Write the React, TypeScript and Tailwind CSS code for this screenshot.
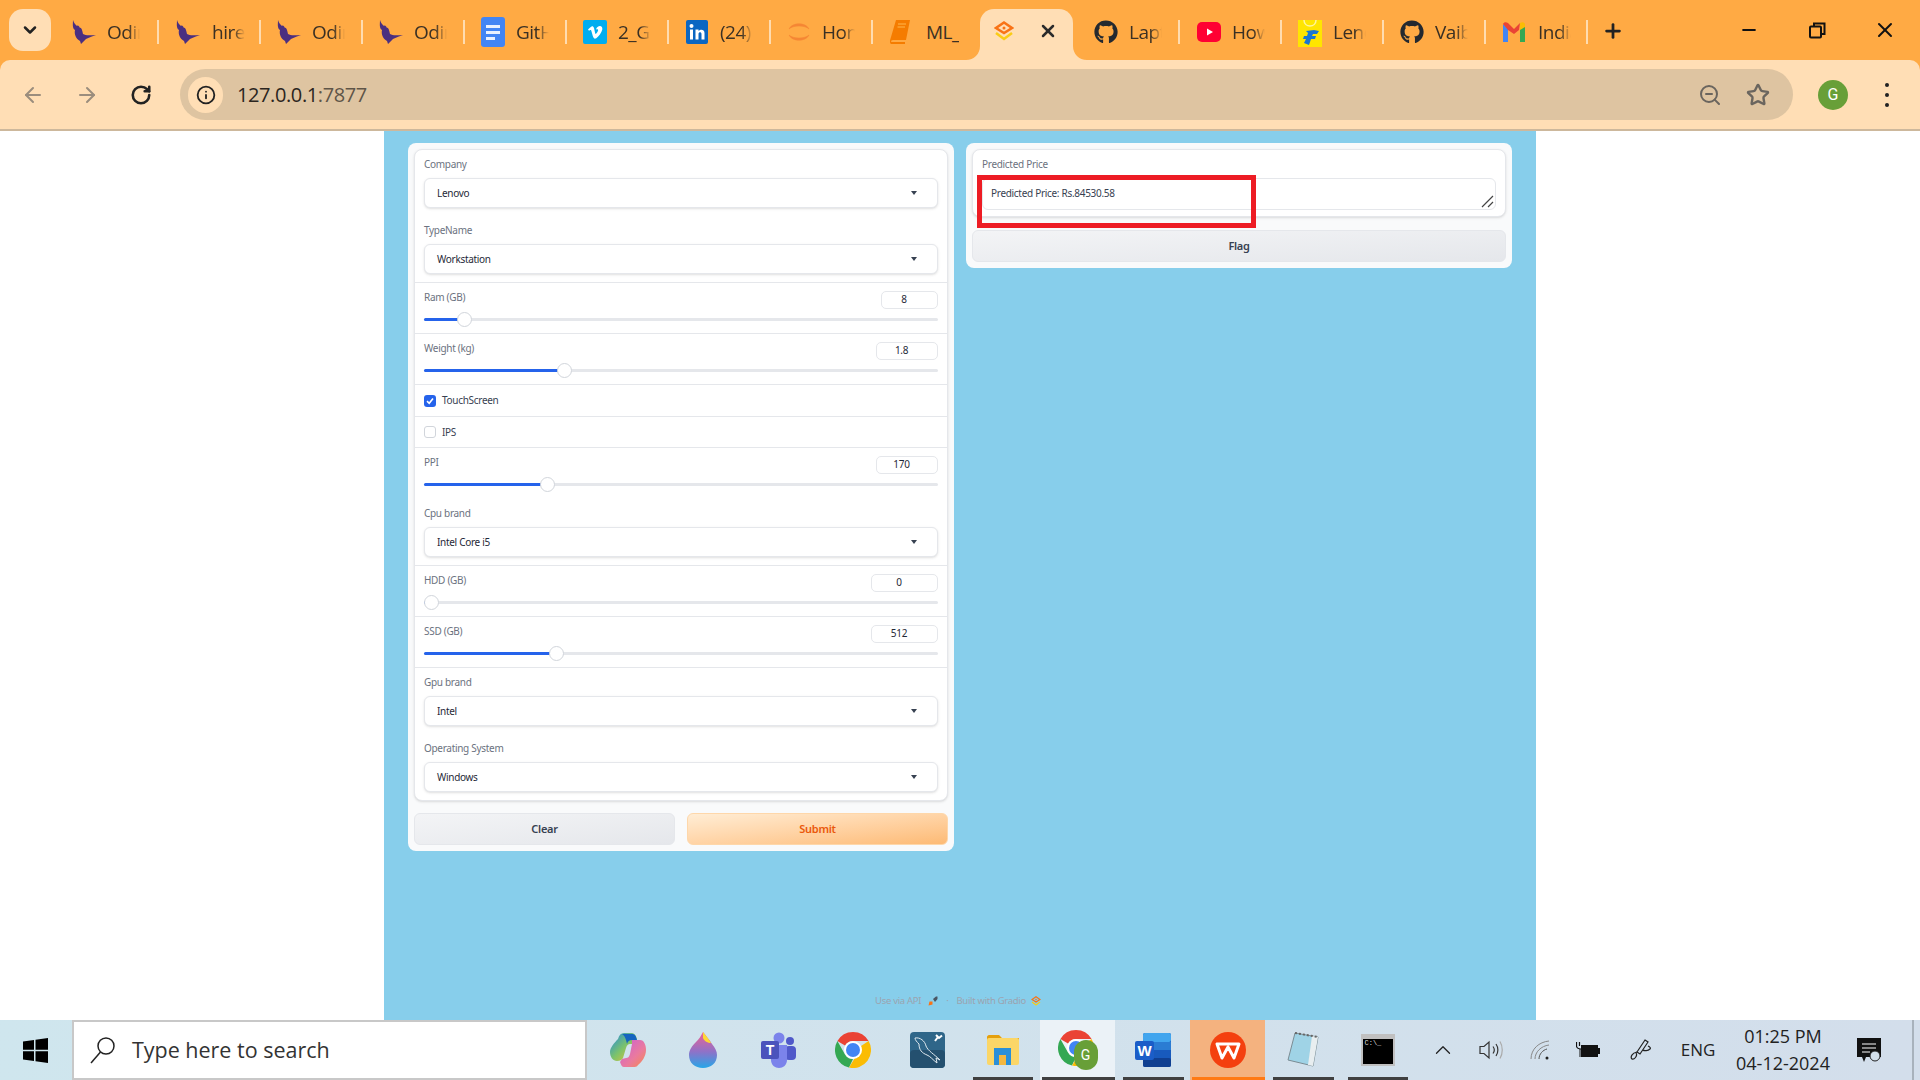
import type { ReactNode } from "react";
import { ArrowLeft, ArrowRight, ChevronDown, ChevronUp, Info, Minus, Plus, RotateCw, Star, X, ZoomOut } from "lucide-react";
import { FaGithub } from "react-icons/fa";

function Bird() {
  return (
    <svg width="24" height="24" viewBox="0 0 24 24">
      <path d="M1 0C2 3 3 4 5 6C6 5 7 6 8 8C9 7 10 9 11 14C14 16 19 15 24 15C20 16 17 18 14 19L9 24L8 21C4 19 2 14 3 10C0 8 1 4 1 0Z" fill="#4b2f80" />
    </svg>
  );
}

function Docs() {
  return (
    <svg width="24" height="30" viewBox="0 0 24 30">
      <rect width="24" height="30" rx="3" fill="#4285f4" />
      <rect x="5" y="8" width="14" height="3" fill="#e8f0fe" />
      <rect x="5" y="14" width="14" height="3" fill="#e8f0fe" />
      <rect x="5" y="20" width="9" height="3" fill="#e8f0fe" />
    </svg>
  );
}

function Vimeo() {
  return (
    <svg width="24" height="24" viewBox="0 0 24 24">
      <rect width="24" height="24" rx="2" fill="#00adef" />
      <path d="M5 9.500L6 10.800C7 10 7.800 9.800 8.200 10.600C9 12.800 9.500 15.500 10.300 17.300C11 18.800 12 19 13.300 18.200C15.800 16.400 18.500 13 19.300 9.500C19.800 6.500 17.200 5 14.500 7C13.800 7.600 13.300 8.500 13 9.500C14.500 8.800 15.500 9.300 15 10.800C14.600 12 13.200 14.200 12.600 14C12 13.500 11.700 10.500 11 8C10.300 6 9 6 7.800 6.900C6.800 7.600 5.800 8.600 5 9.500Z" fill="#fff" />
    </svg>
  );
}

function LinkedIn() {
  return (
    <svg width="22" height="24" viewBox="0 0 22 24">
      <rect width="22" height="24" rx="2" fill="#0a66c2" />
      <circle cx="5.500" cy="6" r="2" fill="#fff" />
      <rect x="4" y="9.500" width="3" height="10" fill="#fff" />
      <path d="M9.500 9.500H12.500V11C13.500 9.300 18.500 8.500 18.500 13V19.500H15.500V14C15.500 11.500 12.500 11.500 12.500 14V19.500H9.500Z" fill="#fff" />
    </svg>
  );
}

function Spinner() {
  return (
    <svg width="24" height="24" viewBox="0 0 24 24" fill="none" stroke="#f58634">
      <path d="M2 9C5 2 19 2 22 9C18 5 6 5 2 9Z" fill="#f58634" strokeWidth="0.500" />
      <path d="M2 15C5 22 19 22 22 15C18 19 6 19 2 15Z" fill="#f58634" strokeWidth="0.500" />
    </svg>
  );
}

function Book() {
  return (
    <svg width="20" height="24" viewBox="0 0 20 24">
      <path d="M6 0H20L16 20H3C1 20 0 22 2 22H15L15 24H2C-1 24 0 20 1 17Z" fill="#f57c00" />
      <path d="M8 4H16M7.500 7H15" stroke="#ffb74d" strokeWidth="1" />
    </svg>
  );
}

function GradioMark({ size = 20 }: { size?: number }) {
  return (
    <svg width={size} height={size} viewBox="0 0 20 20" fill="none" strokeWidth="2.500">
      <path d="M10 1.500L18 7L10 12L2 7Z" stroke="#f97316" />
      <path d="M2 12L10 18L18 12" stroke="#facc15" />
      <circle cx="10" cy="7" r="1.500" fill="#f97316" stroke="none" />
    </svg>
  );
}

function Youtube() {
  return (
    <svg width="24" height="20" viewBox="0 0 24 20">
      <rect width="24" height="20" rx="5" fill="#ff0033" />
      <path d="M10 6.500L16 10L10 13.500Z" fill="#fff" />
    </svg>
  );
}

function Flipkart() {
  return (
    <svg width="24" height="30" viewBox="0 0 24 30">
      <rect y="3" width="24" height="27" fill="#ffe500" />
      <path d="M6 3C6 11 18 11 18 3" fill="none" stroke="#fff59d" strokeWidth="1.500" />
      <path d="M8 14L16 13L21 14L19 17H15L14 19H18L17 22H13L11 28L6 26L8 22H5L6 19H9L10 16Z" fill="#1976d2" />
    </svg>
  );
}

function Gmail() {
  return (
    <svg width="22" height="20" viewBox="0 0 22 20">
      <path d="M0 2V20H5V7Z" fill="#4285f4" />
      <path d="M22 2V20H17V7Z" fill="#34a853" />
      <path d="M0 2C1 0 3 0 5 1L11 7L17 1L16 8L11 12L5 8Z" fill="#ea4335" />
      <path d="M17 1C19 0 21 0 22 2V5L17 8Z" fill="#fbbc04" />
    </svg>
  );
}

function Tab({ icon, title, left = 15, textLeft = 11 }: { icon: ReactNode; title: string; left?: number; textLeft?: number }) {
  return (
    <div className="w-[102px] h-[24px] shrink-0 flex items-center border-r-2 border-[#ffdcb0]" style={{ paddingLeft: left }}>
      <div className="w-[24px] h-[24px] shrink-0 flex items-center justify-center">{icon}</div>
      <span
        className="w-[33px] overflow-hidden whitespace-nowrap text-[19px] tracking-[-0.5px] leading-[24px] text-[#3a3024] [mask-image:linear-gradient(to_right,black_65%,transparent)]"
        style={{ marginLeft: textLeft }}
      >
        {title}
      </span>
    </div>
  );
}

function ActiveTab() {
  return (
    <div className="relative ml-[5px] mr-[5px] w-[93px] h-[51px] self-end shrink-0 bg-[#ffdeb5] rounded-t-[14px] flex items-start pt-[12px] pl-[14px]">
      <svg className="absolute -left-[14px] bottom-0" width="14" height="14" viewBox="0 0 14 14">
        <path d="M14 0V14H0C8 14 14 8 14 0Z" fill="#ffdeb5" />
      </svg>
      <GradioMark size={20} />
      <X className="ml-[24px] mt-[0px] text-[#2b2b2b]" size={20} strokeWidth={3} />
      <svg className="absolute -right-[14px] bottom-0" width="14" height="14" viewBox="0 0 14 14">
        <path d="M0 0V14H14C6 14 0 8 0 0Z" fill="#ffdeb5" />
      </svg>
    </div>
  );
}

function TabStrip() {
  return (
    <div className="h-[60px] shrink-0 bg-[#ffaa44] flex items-center font-['Open_Sans',sans-serif]">
      <div className="ml-[9px] w-[42px] h-[42px] mr-[6px] bg-[#ffdeb5] rounded-[14px] flex items-center justify-center">
        <ChevronDown size={20} strokeWidth={3} className="text-[#222]" />
      </div>
      <div className="flex items-center h-[60px] pt-[4px]">
        <Tab icon={<Bird />} title="Odin" />
        <Tab icon={<Bird />} title="hire" left={17} textLeft={12} />
        <Tab icon={<Bird />} title="Odin" left={16} />
        <Tab icon={<Bird />} title="Odin" left={16} />
        <Tab icon={<Docs />} title="GitH" left={16} />
        <Tab icon={<Vimeo />} title="2_GitH" left={16} />
        <Tab icon={<LinkedIn />} title="(24)" left={16} />
        <Tab icon={<Spinner />} title="Hon" left={16} />
        <div className="w-[102px] h-[24px] shrink-0 flex items-center pl-[17px]">
          <Book />
          <span className="ml-[16px] w-[33px] overflow-hidden whitespace-nowrap text-[19px] tracking-[-0.5px] text-[#3a3024]">ML_</span>
        </div>
      </div>
      <div className="flex h-full items-center">
        <ActiveTab />
        <div className="flex items-center h-[60px] pt-[4px]">
          <Tab icon={<FaGithub size={24} color="#24292f" />} title="Lapt" left={16} />
          <Tab icon={<Youtube />} title="How" left={17} />
          <Tab icon={<Flipkart />} title="Lenovo" left={16} />
          <Tab icon={<FaGithub size={24} color="#24292f" />} title="Vaib" left={16} />
          <Tab icon={<Gmail />} title="India" left={16} textLeft={12} />
        </div>
      </div>
      <Plus className="ml-[14px] mt-[2px] text-[#222]" size={22} strokeWidth={3} />
      <div className="ml-auto flex items-center h-full text-[#111]">
        <Minus size={20} strokeWidth={2.500} className="mr-[50px]" />
        <svg width="17" height="17" viewBox="0 0 17 17" fill="none" stroke="#111" strokeWidth="2" className="mr-[47px]">
          <rect x="1" y="4.500" width="11" height="11" rx="1" />
          <path d="M5 4V1.500H15.500V12H12.500" />
        </svg>
        <X size={24} strokeWidth={2} className="mr-[23px]" />
      </div>
    </div>
  );
}

function Toolbar() {
  return (
    <div className="bg-[#ffaa44] shrink-0">
      <div className="h-[69px] bg-[#ffdeb5] rounded-t-[10px] flex items-center font-['Open_Sans',sans-serif]">
        <ArrowLeft size={24} className="ml-[21px] text-[#9b8d7d]" />
        <ArrowRight size={24} className="ml-[30px] text-[#9b8d7d]" />
        <RotateCw size={22} strokeWidth={2.800} className="ml-[31px] text-[#222]" />
        <div className="ml-[28px] w-[1613px] h-[51px] bg-[#dec4a1] rounded-full flex items-center pl-[8px]">
          <div className="w-[35px] h-[36px] bg-[#ffdeb5] rounded-full flex items-center justify-center">
            <Info size={20} strokeWidth={2.200} className="text-[#222]" />
          </div>
          <span className="ml-[14px] text-[20px] tracking-[-0.4px] text-[#2b2520]">
            127.0.0.1<span className="text-[#5f5548]">:7877</span>
          </span>
          <ZoomOut size={24} strokeWidth={2} className="ml-auto mr-[24px] text-[#6a655e]" />
          <Star size={24} strokeWidth={2.400} className="mr-[23px] text-[#6a655e]" />
        </div>
        <div className="ml-[25px] w-[30px] h-[30px] rounded-full bg-[#689f38] flex items-center justify-center text-white text-[16px] font-['Roboto',sans-serif]">
          G
        </div>
        <div className="ml-[37px] flex flex-col gap-[6px]">
          <span className="w-[4px] h-[4px] rounded-full bg-[#222]" />
          <span className="w-[4px] h-[4px] rounded-full bg-[#222]" />
          <span className="w-[4px] h-[4px] rounded-full bg-[#222]" />
        </div>
      </div>
      <div className="h-[2px] bg-[#cdb89c]" />
    </div>
  );
}

function Caret() {
  return <span className="w-0 h-0 border-x-[3.500px] border-x-transparent border-t-[4px] border-t-[#374151]" />;
}

function Dropdown({ label, value, divider }: { label: string; value: string; divider?: boolean }) {
  return (
    <div className={divider ? "px-[9px] pt-[7px] pb-[8px] border-b border-[#e5e7eb]" : "px-[9px] pt-[7px] pb-[8px]"}>
      <div className="h-[14px] leading-[14px] text-[10px] text-[#6b7280]">{label}</div>
      <div className="mt-[7px] h-[30px] bg-white border border-[#e5e7eb] rounded-[6px] shadow-sm flex items-center justify-between pl-[12px] pr-[20px]">
        <span className="text-[10px] text-[#1f2937]">{value}</span>
        <Caret />
      </div>
    </div>
  );
}

function Slider({ label, value, pos, box, divider }: { label: string; value: string; pos: number; box: number; divider?: boolean }) {
  return (
    <div className={divider ? "h-[51px] px-[9px] pt-[7.500px] border-b border-[#e5e7eb]" : "h-[51px] px-[9px] pt-[7.500px]"}>
      <div className="h-[18px] flex items-center justify-between">
        <span className="self-start leading-[13px] text-[10px] text-[#6b7280]">{label}</span>
        <div
          className="h-[18px] bg-white border border-[#e5e7eb] rounded-[5px] flex items-center justify-center pr-[11px] text-[10px] text-[#1f2937]"
          style={{ width: box }}
        >
          {value}
        </div>
      </div>
      <div className="mt-[3px] h-[15px] flex items-center">
        <div className="relative w-full h-[3px] rounded-full bg-[#e5e7eb]">
          <div className="h-[3px] rounded-full bg-[#2563eb]" style={{ width: pos }} />
          <div
            className="absolute -top-[6px] -ml-[7px] w-[15px] h-[15px] rounded-full bg-white border border-[#d1d5db]"
            style={{ left: pos }}
          />
        </div>
      </div>
    </div>
  );
}

function Checkbox({ label, checked, height }: { label: string; checked?: boolean; height: number }) {
  return (
    <div className="px-[9px] flex items-center border-b border-[#e5e7eb]" style={{ height }}>
      {checked ? (
        <div className="w-[12px] h-[12px] rounded-[3px] bg-[#2563eb] flex items-center justify-center">
          <svg width="8" height="8" viewBox="0 0 8 8" fill="none" stroke="#fff" strokeWidth="1.600">
            <path d="M1 4.200L3.200 6.300L7 1.500" />
          </svg>
        </div>
      ) : (
        <div className="w-[12px] h-[12px] rounded-[3px] bg-white border border-[#d1d5db]" />
      )}
      <span className="ml-[6px] text-[10px] text-[#374151]">{label}</span>
    </div>
  );
}

function InputPanel() {
  return (
    <div className="w-[546px] shrink-0 bg-[#f9fafb] rounded-[8px] p-[6px]">
      <div className="bg-white border border-[#e5e7eb] rounded-[8px] shadow-sm">
        <Dropdown label="Company" value="Lenovo" />
        <Dropdown label="TypeName" value="Workstation" divider />
        <Slider label="Ram (GB)" value="8" pos={40} box={57} divider />
        <Slider label="Weight (kg)" value="1.8" pos={140} box={62} divider />
        <Checkbox label="TouchScreen" checked height={32} />
        <Checkbox label="IPS" height={31} />
        <Slider label="PPI" value="170" pos={123} box={62} />
        <Dropdown label="Cpu brand" value="Intel Core i5" divider />
        <Slider label="HDD (GB)" value="0" pos={7} box={67} divider />
        <Slider label="SSD (GB)" value="512" pos={132} box={67} divider />
        <Dropdown label="Gpu brand" value="Intel" />
        <Dropdown label="Operating System" value="Windows" />
      </div>
      <div className="mt-[12px] flex gap-[12px]">
        <button className="flex-1 h-[32px] rounded-[6px] bg-linear-to-br from-[#f3f4f6] to-[#e5e7eb] border border-[#e5e7eb] text-[11px] font-semibold text-[#374151]">
          Clear
        </button>
        <button className="flex-1 h-[32px] rounded-[6px] bg-linear-to-br from-[#ffedd5] to-[#fdba74] border border-[#fed7aa] text-[11px] font-semibold text-[#ea580c]">
          Submit
        </button>
      </div>
    </div>
  );
}

function OutputPanel() {
  return (
    <div className="relative w-[546px] shrink-0 bg-[#f9fafb] rounded-[8px] p-[6px]">
      <div className="bg-white border border-[#e5e7eb] rounded-[8px] shadow-sm px-[9px] pt-[7px] pb-[6px]">
        <div className="h-[14px] leading-[14px] text-[10px] text-[#6b7280]">Predicted Price</div>
        <div className="relative mt-[7px] h-[32px] bg-white border border-[#e5e7eb] rounded-[6px] pl-[8px] pt-[7px] text-[10px] leading-[14px] text-[#374151]">
          Predicted Price: Rs.84530.58
          <svg className="absolute right-[1px] bottom-[1px]" width="13" height="13" viewBox="0 0 13 13" fill="none" stroke="#444" strokeWidth="1.200">
            <path d="M1 12L12 1M7 12L12 7" />
          </svg>
        </div>
      </div>
      <button className="mt-[13px] w-full h-[32px] rounded-[6px] bg-linear-to-br from-[#f3f4f6] to-[#e5e7eb] border border-[#e5e7eb] text-[11px] font-semibold text-[#374151]">
        Flag
      </button>
      <div className="absolute left-[11px] top-[32px] w-[279px] h-[53px] border-[5px] border-[#ed1c24]" />
    </div>
  );
}

function Footer() {
  return (
    <div className="mt-auto mb-[12px] h-[14px] flex items-center justify-center pr-[4px] text-[9.500px] text-[#9ca3af]">
      <span>Use via API</span>
      <svg className="ml-[7px]" width="10" height="10" viewBox="0 0 10 10">
        <path d="M5 3L8 0.500H9.500V3L7 6Z" fill="#4b5563" />
        <path d="M0.500 9.500L1.500 5.500L4.500 5.500V8.500Z" fill="#f97316" />
      </svg>
      <span className="mx-[8px]">·</span>
      <span>Built with Gradio</span>
      <span className="ml-[5px]">
        <GradioMark size={10} />
      </span>
    </div>
  );
}

function Copilot() {
  return (
    <svg width="36" height="36" viewBox="0 0 36 36">
      <defs>
        <linearGradient id="cp1" x1="0" y1="0" x2="1" y2="1">
          <stop offset="0" stopColor="#1e88e5" />
          <stop offset="0.500" stopColor="#7cc36b" />
          <stop offset="1" stopColor="#f6c12c" />
        </linearGradient>
        <linearGradient id="cp2" x1="0" y1="0" x2="1" y2="1">
          <stop offset="0" stopColor="#c85fd6" />
          <stop offset="0.600" stopColor="#ea7a9e" />
          <stop offset="1" stopColor="#f58b4c" />
        </linearGradient>
      </defs>
      <path d="M8 7C9 3 11 1 14 1H22C24 1 26 3 27 7L24 12H20C18 12 17 13 16 16L13 26C12 28 10 29 7 29C3 29 0 25 0 20C0 16 4 11 8 7Z" fill="url(#cp1)" />
      <path d="M22 8H30C34 8 36 13 36 18C36 24 32 30 28 33C27 35 25 35 23 35H14C12 35 11 33 10 30L12 27L16 26C18 26 19 25 20 22L22 12Z" fill="url(#cp2)" />
      <path d="M12 2H22C25 2 26 4 27 8H22C19 8 18 9 17 12L16 8C15 5 14 3 12 2Z" fill="#1565c0" />
    </svg>
  );
}

function PaintDrop() {
  return (
    <svg width="28" height="36" viewBox="0 0 28 36">
      <defs>
        <linearGradient id="pd" x1="0" y1="0" x2="0" y2="1">
          <stop offset="0" stopColor="#f06292" />
          <stop offset="0.550" stopColor="#8e72c8" />
          <stop offset="1" stopColor="#26a6e8" />
        </linearGradient>
      </defs>
      <path d="M14 0C17 4 20 7 23 12C26 16 28 19 28 23C28 31 22 36 14 36C6 36 0 31 0 23C0 18 3 14 7 10C10 7 12 4 14 0Z" fill="url(#pd)" />
      <path d="M14 0C17 4 20 7 22 11C19 11 15 9 14 6Z" fill="#fdd835" />
    </svg>
  );
}

function Teams() {
  return (
    <svg width="36" height="36" viewBox="0 0 36 36">
      <circle cx="19" cy="6" r="5.500" fill="#7b83eb" />
      <circle cx="30" cy="9" r="4" fill="#5059c9" />
      <rect x="25" y="14" width="11" height="14" rx="4" fill="#5059c9" />
      <path d="M11 13H27V28C27 33 23 36 19 36C15 36 11 33 11 28Z" fill="#7b83eb" />
      <rect x="1" y="9" width="18" height="18" rx="2" fill="#4b53bc" />
      <text x="10" y="23" textAnchor="middle" fontSize="14" fontWeight="700" fill="#fff" fontFamily="Liberation Sans">T</text>
    </svg>
  );
}

function Chrome({ size = 36 }: { size?: number }) {
  return (
    <svg width={size} height={size} viewBox="0 0 36 36">
      <path d="M18 0A18 18 0 0 1 33.600 9H18A9 9 0 0 0 10 13.500L2.400 9A18 18 0 0 1 18 0Z" fill="#ea4335" />
      <path d="M2.400 9L10 22.500A9 9 0 0 0 18 27L14 35.600A18 18 0 0 1 2.400 9Z" fill="#34a853" />
      <path d="M33.600 9A18 18 0 0 1 14 35.600L22 22.500A9 9 0 0 0 26 14Z" fill="#fbbc04" />
      <circle cx="18" cy="18" r="9" fill="#fff" />
      <circle cx="18" cy="18" r="7" fill="#4285f4" />
    </svg>
  );
}

function Mysql() {
  return (
    <svg width="35" height="36" viewBox="0 0 35 36">
      <rect width="35" height="36" rx="4" fill="#2f6689" />
      <rect y="18" width="35" height="18" rx="4" fill="#24506f" />
      <path d="M5 6C10 5 15 9 16 14C18 19 24 22 30 28L26 26L27 31C23 28 20 24 17 23C12 21 9 18 9 12C7 10 5 8 5 6Z" fill="none" stroke="#dfe9ef" strokeWidth="1" />
      <path d="M26 3L29 6L32 3.500M28 5L25 9" fill="none" stroke="#fff" strokeWidth="2" />
    </svg>
  );
}

function Explorer() {
  return (
    <svg width="32" height="30" viewBox="0 0 32 30">
      <path d="M0 2C0 1 1 0 2 0H12L15 3H32V10H0Z" fill="#e5a00d" />
      <rect y="3" width="32" height="27" rx="2" fill="#fbd667" />
      <path d="M7 13H24V30H19V20H12V30H7Z" fill="#2a8fd8" />
      <rect x="12" y="20" width="7" height="10" fill="#f4b73e" />
    </svg>
  );
}

function Word() {
  return (
    <svg width="36" height="34" viewBox="0 0 36 34">
      <rect x="8" width="28" height="34" rx="2" fill="#185abd" />
      <rect x="8" width="28" height="9" rx="2" fill="#41a5ee" />
      <rect x="8" y="9" width="28" height="8" fill="#2b7cd3" />
      <rect x="8" y="25" width="28" height="9" rx="2" fill="#103f91" />
      <rect y="8" width="19" height="19" rx="2" fill="#1a5dc8" />
      <text x="9.500" y="23" textAnchor="middle" fontSize="15" fontWeight="700" fill="#fff" fontFamily="Liberation Sans">W</text>
    </svg>
  );
}

function Wps() {
  return (
    <svg width="36" height="36" viewBox="0 0 36 36">
      <circle cx="18" cy="18" r="18" fill="#f4400f" />
      <path d="M7 12H29L24 26L18 15L12 26Z" fill="none" stroke="#fff" strokeWidth="3" strokeLinejoin="round" />
    </svg>
  );
}

function Notepad() {
  return (
    <svg width="34" height="36" viewBox="0 0 34 36">
      <path d="M9 1L32 5L27 34L2 28Z" fill="#9fd3e6" stroke="#7a8c94" />
      <path d="M26 4L32 5L27 34L22 33Z" fill="#e8eef0" />
      <path d="M9 1L32 5" stroke="#666" strokeWidth="2" strokeDasharray="2 2" />
    </svg>
  );
}

function Terminal() {
  return (
    <div className="w-[34px] h-[32px] bg-black border-2 border-[#c0c0c0] border-t-[5px] pl-[2px] text-[7px] leading-[9px] text-[#ddd] font-['Liberation_Mono',monospace]">
      C:\_
    </div>
  );
}

function Slot({ children, bar, bg }: { children: ReactNode; bar?: string; bg?: string }) {
  return (
    <div className={`relative w-[75px] h-[60px] flex items-center justify-center ${bg ?? ""}`}>
      {children}
      {bar && <div className={`absolute bottom-0 h-[3px] ${bar}`} />}
    </div>
  );
}

function Tray() {
  return (
    <div className="flex items-center h-full text-[#222]">
      <div className="w-[48px] ml-[4px] flex justify-center"><ChevronUp size={26} strokeWidth={1.200} /></div>
      <div className="w-[48px] flex justify-center">
        <svg width="24" height="24" viewBox="0 0 24 24" fill="none" stroke="#333" strokeWidth="1.200">
          <path d="M1 8.500V15.500H5L10 20V4L5 8.500Z" />
          <path d="M14 8.500C15.500 10.500 15.500 13.500 14 15.500M17 6C19.500 9.500 19.500 14.500 17 18" />
          <path d="M21 3.500C24 8.500 24 15.500 21 20.500" stroke="#aaa" />
        </svg>
      </div>
      <div className="w-[49px] flex justify-center">
        <svg width="20" height="20" viewBox="0 0 20 20" fill="none" stroke="#888" strokeWidth="1">
          <path d="M1 19C1 9 9 2 19 1M5 19C5 12 11 6 19 5" />
          <path d="M9 19C9 14 13 10 17 9" stroke="#555" />
          <circle cx="17" cy="18" r="1.500" fill="#222" stroke="none" />
        </svg>
      </div>
      <div className="w-[47px] flex justify-center">
        <svg width="24" height="18" viewBox="0 0 24 18">
          <rect x="5" y="4" width="17" height="12" fill="#111" />
          <rect x="22" y="7" width="2" height="6" fill="#111" />
          <path d="M0.500 1V5C0.500 7 3 8 5 8M3.500 1V5" fill="none" stroke="#111" strokeWidth="1.200" />
          <path d="M4 8V16" stroke="#111" strokeWidth="1" />
        </svg>
      </div>
      <div className="w-[48px] ml-[6px] flex justify-center">
        <svg width="22" height="22" viewBox="0 0 22 22" fill="none" stroke="#222" strokeWidth="1.200">
          <path d="M15 1L18 3L10 15L7 13Z" />
          <path d="M7 13C2 14 0 18 2 20C4 21 8 17 6 14M18 7C20 8 21 9 20 10C18 12 14 12 13 11" />
        </svg>
      </div>
      <div className="w-[58px] ml-[4px] text-center text-[17px]">ENG</div>
      <div className="w-[108px] ml-[2px] flex flex-col items-center text-[18px] leading-[27px]">
        <span>01:25 PM</span>
        <span>04-12-2024</span>
      </div>
      <div className="w-[48px] ml-[8px] flex justify-center">
        <svg width="24" height="24" viewBox="0 0 24 24">
          <path d="M0 0H24V19H9L7 24L5 19H0Z" fill="#111" />
          <path d="M5 6H19M5 10H19M5 14H13" stroke="#fff" strokeWidth="1" />
          <circle cx="18" cy="18" r="5" fill="#d3dfea" stroke="#222" />
        </svg>
      </div>
      <div className="ml-[19px] w-[2px] h-full bg-[#a8b2bc]" />
      <div className="w-[6px]" />
    </div>
  );
}

function Taskbar() {
  return (
    <div className="h-[60px] shrink-0 bg-linear-to-r from-[#cfe6ee] to-[#d3deeb] flex font-['Open_Sans',sans-serif]">
      <div className="w-[72px] flex items-center justify-center">
        <svg width="25" height="25" viewBox="0 0 25 25" fill="#000">
          <path d="M0 3.500L11 2V11.800H0ZM12.500 1.800L25 0V11.800H12.500ZM0 13.300H11V23L0 21.500ZM12.500 13.300H25V25L12.500 23.200Z" />
        </svg>
      </div>
      <div className="w-[516px] h-full bg-white border-2 border-[#c8c8c8] flex items-center pl-[16px]">
        <svg width="26" height="28" viewBox="0 0 26 28" fill="none" stroke="#222" strokeWidth="1.500">
          <circle cx="16" cy="10" r="8" />
          <path d="M10.500 16L1 27" />
        </svg>
        <span className="ml-[16px] text-[21.500px] text-[#333]">Type here to search</span>
      </div>
      <div className="ml-[3px] flex">
        <Slot><Copilot /></Slot>
        <Slot><PaintDrop /></Slot>
        <Slot><Teams /></Slot>
        <Slot><Chrome /></Slot>
        <Slot><Mysql /></Slot>
        <Slot bar="left-[8px] right-[7px] bg-[#404040]"><Explorer /></Slot>
        <Slot bg="bg-[#ebf2f7]" bar="left-[2px] right-0 bg-[#404040]">
          <div className="relative w-[40px] h-[40px]">
            <Chrome />
            <div className="absolute right-0 bottom-0 w-[24px] h-[30px] rounded-full bg-[#689f38] flex items-center justify-center text-[14px] text-white font-['Roboto',sans-serif]">G</div>
          </div>
        </Slot>
        <Slot bar="left-[8px] right-[6px] bg-[#404040]"><Word /></Slot>
        <Slot bg="bg-[#f4b27f]" bar="left-[2px] right-0 bg-[#ff7a14]"><Wps /></Slot>
        <Slot bar="left-[8px] right-[6px] bg-[#404040]"><Notepad /></Slot>
        <Slot bar="left-[8px] right-[7px] bg-[#404040]"><Terminal /></Slot>
      </div>
      <div className="ml-auto h-full"><Tray /></div>
    </div>
  );
}

export default function App() {
  return (
    <div className="w-[1920px] h-[1080px] overflow-hidden flex flex-col bg-white">
      <TabStrip />
      <Toolbar />
      <div className="flex-1 min-h-0 flex justify-center">
        <div className="w-[1152px] h-full bg-[#87ceeb] flex flex-col pt-[12px] tracking-[-0.3px] font-['Noto_Sans',sans-serif]">
          <div className="flex gap-[12px] justify-center items-start">
            <InputPanel />
            <OutputPanel />
          </div>
          <Footer />
        </div>
      </div>
      <Taskbar />
    </div>
  );
}
